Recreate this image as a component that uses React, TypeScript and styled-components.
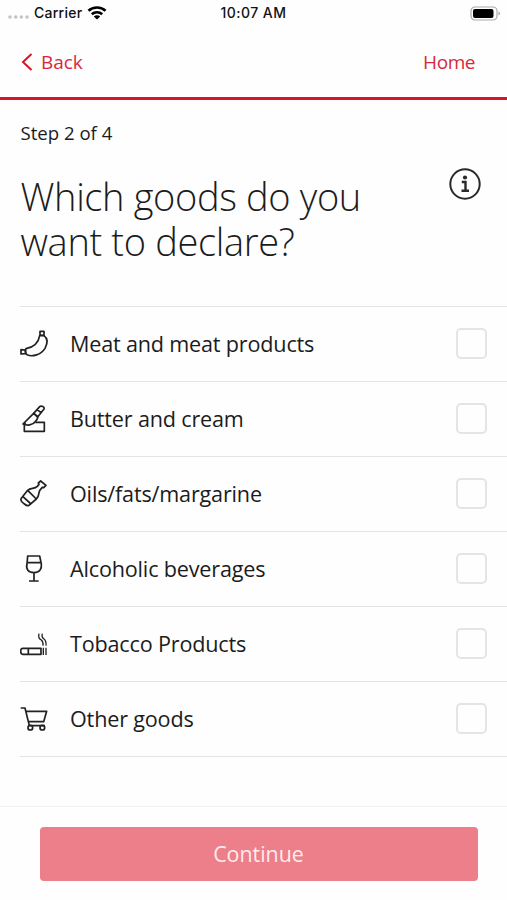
import React from "react";
import styled, { createGlobalStyle } from "styled-components";

const GlobalStyle = createGlobalStyle`
  * { box-sizing: border-box; }
  body { margin: 0; background: #fefefe; }
`;

const Screen = styled.main`
  width: 507px;
  height: 900px;
  display: flex;
  flex-direction: column;
  overflow: hidden;
  background: #fefefe;
  color: #1c1c1c;
  font-family: "Open Sans", "Noto Sans", sans-serif;
`;

const StatusBar = styled.div`
  height: 26px;
  flex: none;
  display: grid;
  grid-template-columns: 1fr auto 1fr;
  align-items: center;
  padding: 0 8px 0 8px;
  font: 500 14px/26px Inter, sans-serif;
  color: #111;
`;

const Carrier = styled.div`
  display: flex;
  align-items: center;
  gap: 5px;
  letter-spacing: 0.25px;
`;

const Clock = styled.time`
  letter-spacing: 0.45px;
`;

const Battery = styled.svg`
  justify-self: end;
  margin-right: -2px;
`;

const NavBar = styled.header`
  height: 74px;
  flex: none;
  display: flex;
  justify-content: space-between;
  align-items: center;
  padding: 0 32px 0 21px;
  border-bottom: 3px solid #d8132b;
`;

const NavButton = styled.button<{ $tight?: boolean }>`
  display: flex;
  align-items: center;
  gap: 8px;
  padding: 0;
  border: 0;
  background: none;
  color: #d9283c;
  font: 400 19px/28px "Open Sans", sans-serif;
  letter-spacing: ${({ $tight }) => ($tight ? "-0.45px" : "-0.1px")};
`;

const Intro = styled.section`
  height: 206px;
  flex: none;
  padding: 19px 26px 0 20.5px;
`;

const Step = styled.p`
  margin: 0;
  font-size: 18.6px;
  line-height: 27px;
`;

const TitleRow = styled.div`
  display: flex;
  justify-content: space-between;
  align-items: flex-start;
  margin-top: 28px;
`;

const Title = styled.h1`
  width: 380px;
  margin: 0;
  font-size: 38px;
  font-weight: 300;
  line-height: 45px;
  letter-spacing: -0.35px;
`;

const InfoIcon = styled.svg`
  margin-top: -6px;
`;

const GoodsList = styled.ul`
  flex: 1;
  margin: 0 0 0 20px;
  padding: 0;
  list-style: none;
`;

const GoodsRow = styled.li`
  height: 75.08px;
  display: flex;
  align-items: center;
  padding-right: 20px;
  border-top: 1px solid #e4e4e4;
  &:last-child {
    height: 76.08px;
    border-bottom: 1px solid #e4e4e4;
  }
`;

const GoodsIcon = styled.svg`
  width: 32px;
  height: 34px;
  margin-right: 18px;
  fill: none;
  stroke: #222;
  stroke-width: 5.1;
  stroke-linejoin: round;
`;

const Label = styled.label`
  flex: 1;
  margin-top: -1px;
  font-size: 21.6px;
  line-height: 30px;
  letter-spacing: -0.18px;
`;

const Checkbox = styled.input`
  appearance: none;
  width: 31px;
  height: 31px;
  margin: -1px 0 0;
  border: 2px solid #e4e4e4;
  border-radius: 5px;
`;

const Footer = styled.footer`
  height: 94px;
  flex: none;
  padding: 20px 29px 0 40px;
  border-top: 1px solid #f1f1f1;
`;

const ContinueButton = styled.button`
  width: 100%;
  height: 54px;
  padding: 0 1px 0 0;
  border: 0;
  border-radius: 4px;
  background: #ed7f8b;
  color: #fdecec;
  font: 400 21.4px/30px "Open Sans", sans-serif;
`;

const goods = [
  {
    id: "meat",
    label: "Meat and meat products",
    icon: (
      <>
        <path d="M89 46C86 65 75 80 48 85C44 89 45 99 51 103C67 111 93 103 105 84C113 69 113 54 102 46Z" />
        <path d="M90 44V33H102V45ZM47 89L33 88V101L47 100Z" />
      </>
    ),
  },
  {
    id: "butter",
    label: "Butter and cream",
    icon: (
      <>
        <path d="M47 82L43 86V108H103V81H76" />
        <path d="M39 86C51 91 68 91 77 78C82 71 84 67 83 64L71 54Z" />
        <path d="M71 54L89 34C94 29 105 36 102 41L83 65ZM81 43L95 53" />
      </>
    ),
  },
  {
    id: "oils",
    label: "Oils/fats/margarine",
    icon: (
      <>
        <path d="M34 84L53 60C62 51 73 57 82 48L87 42L85 38L92 32L108 45L101 52L97 51L91 58C83 67 90 76 79 86L57 105C51 109 46 103 41 99C34 94 30 90 34 84Z" />
        <path d="M53 60L79 86M38 78L63 101" />
      </>
    ),
  },
  {
    id: "alcohol",
    label: "Alcoholic beverages",
    icon: (
      <path d="M53 32H89L94 56C96 71 88 82 72 82C55 82 47 71 51 56ZM51 52H94M72 82V106M57 107H86" />
    ),
  },
  {
    id: "tobacco",
    label: "Tobacco Products",
    icon: (
      <>
        <path d="M38 84H93V102H38C34 102 32 99 32 93C32 87 34 84 38 84ZM55 84V102" />
        <path strokeWidth="4" d="M100 82V104M108 82V104M87 40C84 52 88 55 94 59C99 63 100 67 99 76M97 40C94 50 97 53 102 56C108 60 109 65 108 76" />
      </>
    ),
  },
  {
    id: "other",
    label: "Other goods",
    icon: (
      <>
        <path d="M32 38H45L58 91H105M49 48H110L101 79H55" />
        <circle cx="61" cy="97" r="7" />
        <circle cx="97" cy="97" r="7" />
      </>
    ),
  },
];

export default function App() {
  return (
    <>
      <GlobalStyle />
      <Screen>
        <StatusBar>
          <Carrier>
            <svg width="21" height="12" viewBox="0 0 21 12" fill="#c4c4c4">
              <circle cx="2" cy="10" r="1.8" />
              <circle cx="7.7" cy="10" r="1.8" />
              <circle cx="13.3" cy="10" r="1.8" />
              <circle cx="19" cy="10" r="1.8" />
            </svg>
            Carrier
            <svg width="20" height="14" viewBox="0 0 20 14" fill="none" stroke="#000" strokeWidth="2.6">
              <path d="M1.5 4.8C6 .4 14 .4 18.5 4.8M4.8 8.2C7.7 5.5 12.3 5.5 15.2 8.2" />
              <path d="M10 13.5L6.8 10.4C8.6 8.9 11.4 8.9 13.2 10.4Z" fill="#000" stroke="none" />
            </svg>
          </Carrier>
          <Clock>10:07 AM</Clock>
          <Battery width="31" height="15" viewBox="0 0 31 15">
            <rect x="1" y="1" width="26" height="13" rx="4" fill="#fff" stroke="#aaa" strokeWidth="1.2" />
            <rect x="3" y="3" width="20.5" height="9" rx="2" fill="#000" />
            <path d="M28.5 5.5C30.5 6.5 30.5 8.5 28.5 9.5Z" fill="#999" />
          </Battery>
        </StatusBar>
        <NavBar>
          <NavButton>
            <svg width="12" height="18" viewBox="0 0 12 18" fill="none" stroke="#dc1426" strokeWidth="2">
              <path d="M10.5 1L2 9L10.5 17" />
            </svg>
            Back
          </NavButton>
          <NavButton $tight>Home</NavButton>
        </NavBar>
        <Intro>
          <Step>Step 2 of 4</Step>
          <TitleRow>
            <Title>Which goods do you want to declare?</Title>
            <InfoIcon width="32" height="32" viewBox="0 0 32 32" fill="none" stroke="#292929" strokeWidth="2">
              <circle cx="16" cy="16" r="14.7" />
              <circle cx="16" cy="9.5" r="2.1" fill="#292929" stroke="none" />
              <path d="M12.8 14H16.5V22.5M12.5 22.7H20" strokeWidth="2.4" />
            </InfoIcon>
          </TitleRow>
        </Intro>
        <GoodsList>
          {goods.map((item) => (
            <GoodsRow key={item.id}>
              <GoodsIcon viewBox="30 20 96 102">{item.icon}</GoodsIcon>
              <Label htmlFor={item.id}>{item.label}</Label>
              <Checkbox type="checkbox" id={item.id} />
            </GoodsRow>
          ))}
        </GoodsList>
        <Footer>
          <ContinueButton>Continue</ContinueButton>
        </Footer>
      </Screen>
    </>
  );
}
